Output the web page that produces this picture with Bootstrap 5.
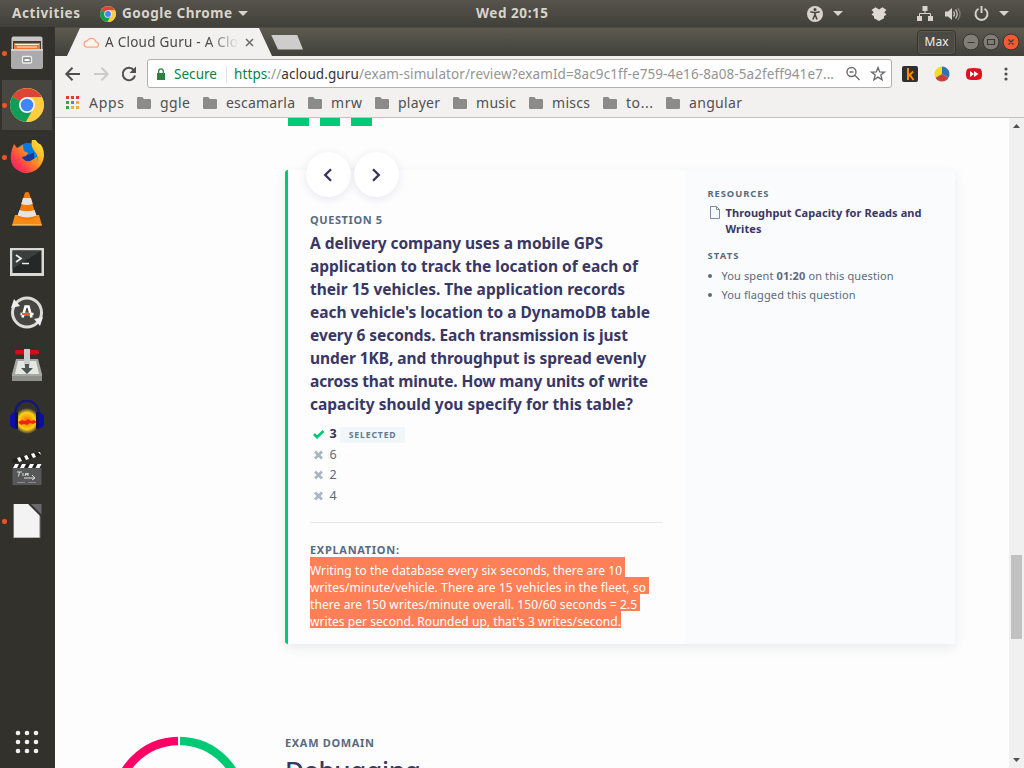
<!DOCTYPE html>
<html lang="en">
<head>
<meta charset="utf-8">
<title>A Cloud Guru - A Cloud Guru</title>
<link href="https://cdn.jsdelivr.net/npm/bootstrap@5.3.0/dist/css/bootstrap.min.css" rel="stylesheet">
<style>
body{width:1024px;height:768px;overflow:hidden;font-family:"Noto Sans","Open Sans",sans-serif;background:#fdfdfd;color:#5a6a7e}
svg{display:block;flex:none}
.fit{display:block;white-space:nowrap;flex:none}
.topbar{height:27px;background:linear-gradient(#56544c,#403f39);color:#d8d4cb;font-weight:700;font-size:13.5px;line-height:27px;padding-left:12px}
.dock{width:55px;background:#33312c}
.launcher{height:52px;width:55px;padding-left:10px;position:relative}
.launcher svg{width:34px;height:34px}
.running::before{content:"";position:absolute;left:2px;top:24px;width:4.5px;height:4.5px;border-radius:50%;background:#ee5522}
.active-app{background:linear-gradient(#484641,#484641) 2px 1px/50px 50px no-repeat}
.apps-btn{padding:0 0 12px 13px}
.tabstrip{height:29px;background:linear-gradient(#5c5a50,#42413a);padding-left:12px;border-top:1px solid #4d4b43}
.tab-shape{width:205px;height:28px;background:#f2f1f0;clip-path:polygon(0 100%,13px 0,192px 0,100% 100%);padding-left:16px;color:#4a4a4a;font-size:13.5px}
.tab-title{width:133px;overflow:hidden;-webkit-mask-image:linear-gradient(90deg,#000 104px,transparent 134px);mask-image:linear-gradient(90deg,#000 104px,transparent 134px)}
.new-tab{width:32px;height:15px;background:#cfcdcb;clip-path:polygon(0 0,26px 0,100% 100%,7px 100%);margin-left:-1px}
.user-btn{width:39px;height:25px;border:1px solid #35342e;border-radius:4px;background:#4b4a43;color:#eee;font-size:12px;box-shadow:inset 0 0 0 1px #59574f}
.toolbar{height:35px;background:#f2f1f0;padding-left:9px}
.omnibox{width:745px;height:29px;border:1px solid #b2b0ae;border-radius:3px;background:#fff;margin-left:9px;padding-left:8px;font-size:13.5px;color:#949494}
.omnibox .fit{position:relative;top:.5px}
.secure{color:#0b8043}
.bookmarks{height:27px;background:#f2f1f0;border-bottom:1px solid #c4c2c0;font-size:14px;color:#505050;padding:0 0 3px 11px}
.viewport{background:#fdfdfd;padding-left:230px;height:650px;overflow:hidden}
.scrollbar{width:15px;background:#f0f0f0}
.thumb{width:11px;height:84px;background:#c1c1c1}
.steps{height:8px;padding-left:3px}
.steps i{height:8px;background:#00c975}
.review{width:670px;height:474px;margin-top:44px;background:#fdfdfe;border-left:3px solid #00c975;border-radius:3px 0 0 3px;box-shadow:0 4px 12px rgba(40,50,80,.09);position:relative}
.question{width:397px;padding:39px 0 0 22px}
.navs{left:17.5px;top:-18px;gap:3px}
.nav-round{width:45px;height:45px;border-radius:50%;background:#fff;box-shadow:0 2px 8px rgba(40,50,80,.1)}
.eyebrow{font-weight:700;font-size:11px;line-height:22px;color:#596a7e}
.ask{font-weight:700;font-size:15.5px;line-height:23px;color:#393764;margin-top:1px}
.answers{margin-top:8px;font-size:12.5px;color:#596a7e}
.answer{height:20.6px;line-height:20px;padding-left:3px}
.answer svg{margin-right:4.5px}
.pill{background:#f1f6fa;color:#627a93;font-size:8.6px;font-weight:700;height:16px;line-height:16px;width:65px;padding-left:9px;border-radius:2px;margin:2px 0 0 3px}
.rule{height:1px;background:#e9e9eb;width:353px;margin-top:16px}
.picked{background:#ff7f57;color:#fff;font-size:12px;line-height:17px;height:17px}
.picked .fit{position:relative;top:1.6px}
.side{width:270px;background:#fafbfd;padding:13px 0 0 22.5px}
.side .eyebrow{font-size:9.4px}
.res{color:#393764;font-weight:700;font-size:11px;line-height:16px}
.stats{margin-top:-1px}
.stat{font-size:11px;line-height:19px}
.stat::before{content:"";width:4px;height:4px;border-radius:50%;background:#596a7e;margin-right:10px}
.domain{margin:92px 0 0 -174px}
.big{font-size:26px;line-height:32px;font-weight:500;color:#393764}
</style>
</head>
<body class="d-flex flex-column">
<svg width="0" height="0" class="position-absolute"><defs>
<symbol id="chrome" viewBox="0 0 34 34"><circle cx="17" cy="17" r="17" fill="#fc4"/><path d="M17 17 2.3 8.5A17 17 0 0 1 31.7 9H17z" fill="#db4437"/><path d="M17 17 2.3 8.5A17 17 0 0 0 16 34l7-13z" fill="#0f9d58"/><path d="M17 9H31.7A17 17 0 0 1 16 34l8-13z" fill="#ffcd40"/><circle cx="17" cy="17" r="8" fill="#f4f4f4"/><circle cx="17" cy="17" r="6.3" fill="#4285f4"/></symbol>
<symbol id="folder" viewBox="0 0 14 12"><path d="M0 1.2Q0 0 1.200 0h4l1.800 2h5.800Q14 2 14 3.200v7.600Q14 12 12.800 12H1.200Q0 12 0 10.800z" fill="#8b8b8b"/></symbol>
<symbol id="down" viewBox="0 0 10 5"><path d="M0 0h10L5 5z" fill="#d8d4cb"/></symbol>
<symbol id="cross" viewBox="0 0 12 12"><path d="m3 3.500 5 5M8 3.500l-5 5" stroke="#a9b5c2" stroke-width="2.700" stroke-linecap="square"/></symbol>
</defs></svg>

<header class="topbar d-flex align-items-center flex-shrink-0">
<span class="fit" data-w="68">Activities</span>
<svg width="16" height="16" style="margin-left:20px"><use href="#chrome"/></svg>
<span class="fit" data-w="110" style="margin-left:6px">Google Chrome</span>
<svg width="10" height="5" style="margin-left:6px"><use href="#down"/></svg>
<span class="fit" data-w="72" style="margin-left:228px">Wed 20:15</span>
<svg width="16" height="16" viewBox="0 0 16 16" style="margin-left:259px"><circle cx="8" cy="8" r="8" fill="#d8d4cb"/><circle cx="8" cy="3.400" r="1.500" fill="#48463f"/><path d="M3.300 5.800 7 6.500h2l3.700-.7M8 6.500V9M8 8.500l-2.100 5M8 8.500l2.100 5" fill="none" stroke="#48463f" stroke-width="1.600"/></svg>
<svg width="10" height="5" style="margin-left:10px"><use href="#down"/></svg>
<svg width="16" height="14" viewBox="0 0 16 14" style="margin-left:28px"><path d="M4.500.300 8 2.600 11.500.300 15.500 3 13.200 5.200l2.300 2.300-2.500 1.800v2L8 14l-5-2.700v-2L.5 7.500l2.300-2.300L.5 3z" fill="#dedad2"/></svg>
<svg width="16" height="15" viewBox="0 0 16 15" style="margin-left:30px"><path d="M5.500 0h5v5h-5zM0 10h5v5H0zM11 10h5v5h-5z" fill="#d8d4cb"/><path d="M8 5v2.500M2.500 10V7.500h11V10" fill="none" stroke="#d8d4cb"/></svg>
<svg width="16" height="14" viewBox="0 0 16 14" style="margin-left:12px"><path d="M0 4.500h3L7 1v12L3 9.500H0z" fill="#d8d4cb"/><path d="M8.500 4.500q2 2.500 0 5M10.500 2.500q3.500 4.500 0 9" fill="none" stroke="#bdb9b1" stroke-width="1.400"/><path d="M12.800 1q4.500 6 0 12" fill="none" stroke="#7f7c74" stroke-width="1.300"/></svg>
<svg width="15" height="16" viewBox="0 0 15 16" style="margin-left:13px"><path d="M4.500 2.800a6 6 0 1 0 6 0M7.500 0v7" fill="none" stroke="#d8d4cb" stroke-width="1.900"/></svg>
<svg width="10" height="5" style="margin-left:10px"><use href="#down"/></svg>
</header>

<div class="d-flex flex-grow-1">
<nav class="dock d-flex flex-column flex-shrink-0">
<div class="launcher running d-flex align-items-center"><svg viewBox="0 0 34 34"><path d="M1.500 2.500Q1.500.500 3.500.500h27q2 0 2 2v14h-31z" fill="#c6c6c6"/><path d="M3 5h28v11H3z" fill="#4a3b30"/><path d="M4 7h26v6H4z" fill="#e77b32"/><path d="M5 8.500h24M7 11h20" stroke="#fff0d8"/><path d="M1 13h32v18q0 2-2 2H3q-2 0-2-2z" fill="#ababab"/><path d="M1 13h32v2H1z" fill="#d2d2d2"/><rect x="12.500" y="20.500" width="9" height="6.500" rx="1" fill="#888" stroke="#eee" stroke-width="1.300"/><path d="M14.500 24h5" stroke="#fff" stroke-width="2"/></svg></div>
<div class="launcher running active-app d-flex align-items-center"><svg><use href="#chrome"/></svg></div>
<div class="launcher running d-flex align-items-center"><svg viewBox="0 0 34 34"><defs><linearGradient id="fx" x1="1" y1="0" x2="0" y2="1"><stop stop-color="#fff044"/><stop offset=".3" stop-color="#ffc228"/><stop offset=".5" stop-color="#ff8424"/><stop offset=".75" stop-color="#ff3750"/><stop offset="1" stop-color="#e01575"/></linearGradient></defs><circle cx="18" cy="16" r="13" fill="#0a7fe8"/><path d="M8 9q9-9 15-3l2 15-11 5z" fill="#0879dc"/><path d="M11 15q8 1 13-3v14H12z" fill="#173998"/><path d="M4 4 7 8q3-1 6-3 0 4 1 6l4 2-2 3-4 1q2 5 8 4 4-2 7-4 1 3-2 6 5-3 1-10-7-7-3-16l5 6q6 2 6 13-1 9-8 14-9 6-17 1Q-1 26 1 14q1-6 3-10z" fill="url(#fx)"/></svg></div>
<div class="launcher d-flex align-items-center"><svg viewBox="0 0 34 34"><path d="m5 23-3 10.500h30L29 23z" fill="#f88b13"/><path d="M3 32h28l1 1.500H2z" fill="#ffb14b"/><path d="M15 .5q2-1 4 0L26.500 25Q17 31 7.500 25z" fill="#f07a08"/><path d="M13 6h8l1.800 6q-5.800 2-11.600 0zM9.500 18q7.500 2.500 15 0l2 5.500q-9 4-19 0z" fill="#e4e4e4"/></svg></div>
<div class="launcher d-flex align-items-center"><svg viewBox="0 0 34 34"><rect x="0" y="4" width="34" height="28" fill="#d8d8d5"/><rect x="2.500" y="6.500" width="29" height="22.500" fill="#242827"/><path d="M2.500 6.500h29L2.500 25z" fill="#3a3e3d"/><path d="m6 11 5 3.500L6 18M12 19.500h7" fill="none" stroke="#eee" stroke-width="1.700"/></svg></div>
<div class="launcher d-flex align-items-center"><svg viewBox="0 0 34 34"><circle cx="17" cy="16.500" r="14.500" fill="#484642" stroke="#dddcd8" stroke-width="3"/><path d="m1 12 9-2-6-7zM33 21l-9 2 6 7z" fill="#eee"/><path d="m12.500 21.500 3-11h3l3 11M10.500 18h13" fill="none" stroke="#fff" stroke-width="2.600"/><path d="M12 18h8" stroke="#ee5b28" stroke-width="2"/></svg></div>
<div class="launcher d-flex align-items-center"><svg viewBox="0 0 34 34"><path d="M6 11h22l4 15v7H2v-7z" fill="#a6a9a3"/><path d="M8 13h18l3 13H5z" fill="#e5e7e1"/><path d="M2 28h30v5H2z" fill="#8d908b"/><rect x="5" y="2" width="24" height="4.500" rx="2" fill="#d50d16"/><path d="M14 1h6v17h-6z" fill="#c9ccca"/><path d="M11 20h4v-4h4v4h4l-6 6z" fill="#4d5755"/></svg></div>
<div class="launcher d-flex align-items-center"><svg viewBox="0 0 34 34"><defs><radialGradient id="au"><stop offset=".2" stop-color="#ff8a00"/><stop offset=".65" stop-color="#ffcf16"/><stop offset="1" stop-color="#ffd735" stop-opacity="0"/></radialGradient></defs><ellipse cx="17" cy="21" rx="13" ry="13" fill="url(#au)"/><path d="m8 22 4-2 3 1 3-2 3 2 3-1 3 2-4 2-3-1-3 2-3-1-3 1z" fill="#f22407"/><path d="M5 15C5-4 29-4 29 15" fill="none" stroke="#15186e" stroke-width="2.500"/><path d="M8 12v17Q0 29-1 21q0-9 9-9zM26 12v17q8 0 9-8 0-9-9-9z" fill="#0b0fa8"/><path d="M6.500 12.500v16M27.500 12.500v16" stroke="#11133f" stroke-width="2.500"/></svg></div>
<div class="launcher d-flex align-items-center"><svg viewBox="0 0 34 34"><path d="m2 7 28-7 1 4L3 11z" fill="#222"/><path d="m7 6 3-1 2 4-3 1zM14 4l3-1 2 4-3 1zM21 2l3-1 2 4-3 1zM28 0h2l1 3z" fill="#fff"/><path d="M2.500 12h29v21h-29z" fill="#575858"/><path d="M2.500 12h29v4h-29z" fill="#222"/><path d="M5 12h4l-2 4H3zM12 12h4l-2 4h-4zM20 12h4l-2 4h-4zM27.500 12h4l-2 4h-4z" fill="#fff"/><path d="M7 20h5M9.500 20l-1 4.500M13 21v3M15 24l1-3 1 2 1-2v3M14 26h11M22 23l3 3-3 2" stroke="#ddd" fill="none"/><path d="M7 30.500h8M18 30.500h8" stroke="#888"/></svg></div>
<div class="launcher running d-flex align-items-center"><svg viewBox="0 0 34 34"><path d="M3.500-.5H20l10 11v23.500h-26.500z" fill="#f3f3f3" stroke="#777"/><path d="M19-.5h12.500V12z" fill="#6a6a6a"/><path d="m19-.5 12.500 12.500" stroke="#333" stroke-width="2"/></svg></div>
<div class="apps-btn mt-auto"><svg width="28" height="28" viewBox="0 0 28 28" fill="#f2f1ef"><circle cx="5" cy="5" r="2.300"/><circle cx="14" cy="5" r="2.300"/><circle cx="23" cy="5" r="2.300"/><circle cx="5" cy="14" r="2.300"/><circle cx="14" cy="14" r="2.300"/><circle cx="23" cy="14" r="2.300"/><circle cx="5" cy="23" r="2.300"/><circle cx="14" cy="23" r="2.300"/><circle cx="23" cy="23" r="2.300"/></svg></div>
</nav>

<div class="flex-grow-1">
<div class="tabstrip d-flex align-items-center">
<div class="tab-shape d-flex align-items-center"><svg width="16" height="11" viewBox="0 0 16 11"><path d="M4 10.200h8.500a2.700 2.700 0 0 0 .4-5.400A4.600 4.600 0 0 0 4.300 4 3.100 3.100 0 0 0 4 10.200z" fill="#fff4ec" stroke="#f6a988" stroke-width="1.300"/></svg>
<div class="tab-title" style="margin-left:6px"><span class="fit" data-w="133">A Cloud Guru - A Clo</span></div>
<svg width="9" height="9" viewBox="0 0 9 9" style="margin-left:7px"><path d="m1 1 7 7M8 1 1 8" stroke="#6b6b6b" stroke-width="1.500"/></svg></div>
<div class="new-tab"></div>
<div class="user-btn d-flex align-items-center justify-content-center ms-auto"><span class="fit" data-w="24">Max</span></div>
<svg width="64" height="20" viewBox="0 0 64 20" style="margin-left:4px"><g stroke="#36352f"><circle cx="11" cy="10" r="8" fill="#807e76"/><circle cx="31" cy="10" r="8" fill="#807e76"/><circle cx="51" cy="10" r="8" fill="#f15b34"/></g><path d="M7.500 10.500h7M27.500 7.500h7v5h-7zM48.500 7.500l5 5M53.500 7.500l-5 5" fill="none" stroke="#3b3a34" stroke-width="1.200"/></svg>
</div>
<div class="toolbar d-flex align-items-center">
<svg width="74" height="18" viewBox="0 0 74 18" fill="none" stroke-width="2"><path d="M16 9H3M8.500 2.800 2.300 9l6.200 6.200" stroke="#4f4f4f"/><path d="M30 9h13M37.500 2.800 43.700 9l-6.200 6.200" stroke="#cbcac9"/><path d="M69.700 5A6.200 6.200 0 1 0 71 10.500" stroke="#4f4f4f"/><path d="M72 1.500V8h-6.500z" fill="#4f4f4f"/></svg>
<div class="omnibox d-flex align-items-center">
<svg width="10" height="12" viewBox="0 0 10 12"><path d="M1 5h8v7H1z" fill="#2c8143"/><path d="M2.700 5V3.200a2.300 2.300 0 0 1 4.600 0V5" fill="none" stroke="#2c8143" stroke-width="1.300"/></svg>
<span class="fit secure" data-w="43" style="margin-left:8px">Secure</span>
<span class="vr" style="height:17px;margin:6px 7px 0 9px;align-self:flex-start"></span>
<span class="fit" data-w="600"><span class="secure">https</span>://<span style="color:#333">acloud.guru</span>/exam-simulator/review?examId=8ac9c1ff-e759-4e16-8a08-5a2feff941e7...</span>
<svg width="15" height="15" viewBox="0 0 15 15" fill="none" stroke="#6b6b6b" stroke-width="1.400" style="margin-left:12px"><circle cx="5.500" cy="6" r="4.500"/><path d="m9 9.500 4.500 4.500M3.500 6h4"/></svg>
<svg width="16" height="15" viewBox="0 0 16 15" style="margin-left:9px"><path d="m8 1.500 1.700 4.400 4.800.2-3.700 3 1.300 4.700L8 11.100l-4.100 2.700 1.300-4.700-3.700-3 4.800-.2z" fill="none" stroke="#666" stroke-width="1.300"/></svg>
</div>
<svg width="16" height="16" viewBox="0 0 16 16" style="margin-left:10px"><rect width="16" height="16" rx="2" fill="#2e2e2e"/><path d="M6 2v12M11.200 5.500 6.500 10M8 9l3.500 5" stroke="#f80" stroke-width="2" fill="none"/></svg>
<svg width="16" height="16" viewBox="0 0 16 16" style="margin-left:16px"><path d="M8 8V.5A7.500 7.500 0 0 0 1.500 11.700z" fill="#f2df22"/><path d="M8 8V.5a7.500 7.500 0 0 1 6.500 11.200z" fill="#2f73b7"/><path d="m8 8 6.500 3.700a7.500 7.500 0 0 1-13 0z" fill="#c3413f"/></svg>
<svg width="16" height="12" viewBox="0 0 16 12" style="margin-left:16px"><path d="M2.500.500q5.500-1 11 0Q16 1 16 6t-2.500 5.500q-5.500 1-11 0Q0 11 0 6T2.500.500z" fill="#e30f1c"/><path d="m4 3 4 3-4 3zM8 3l4.500 3L8 9z" fill="#fff"/></svg>
<svg width="4" height="14" viewBox="0 0 4 14" fill="#505050" style="margin-left:22px"><circle cx="2" cy="2" r="1.600"/><circle cx="2" cy="7" r="1.600"/><circle cx="2" cy="12" r="1.600"/></svg>
</div>
<div class="bookmarks d-flex align-items-center" id="marks">
<svg width="13" height="13" viewBox="0 0 13 13"><path d="M0 0h3v3H0zM5 0h3v3H5zM10 0h3v3h-3z" fill="#e33b32"/><path d="M0 5h3v3H0zM0 10h3v3H0z" fill="#36a350"/><path d="M5 5h3v3H5z" fill="#4285f4"/><path d="M10 5h3v3h-3zM5 10h3v3H5zM10 10h3v3h-3z" fill="#f5ae2d"/></svg>
<span class="fit" data-w="35" style="margin:0 13px 0 10px">Apps</span>
</div>
<div class="d-flex">
<main class="viewport flex-grow-1">
<div class="steps d-flex"><i style="width:21px"></i><i style="width:20px;margin-left:11px"></i><i style="width:21px;margin-left:11px"></i></div>
<section class="review d-flex">
<div class="navs position-absolute d-flex">
<div class="nav-round d-flex align-items-center justify-content-center"><svg width="10" height="14" viewBox="0 0 10 14"><path d="M8 1.200 2.200 7 8 12.800" fill="none" stroke="#35325c" stroke-width="2.300"/></svg></div>
<div class="nav-round d-flex align-items-center justify-content-center"><svg width="10" height="14" viewBox="0 0 10 14"><path d="M2 1.200 7.800 7 2 12.800" fill="none" stroke="#35325c" stroke-width="2.300"/></svg></div>
</div>
<div class="question flex-shrink-0">
<div class="eyebrow fit" data-w="72">QUESTION 5</div>
<div class="ask">
<span class="fit" data-w="293">A delivery company uses a mobile GPS</span>
<span class="fit" data-w="328">application to track the location of each of</span>
<span class="fit" data-w="315">their 15 vehicles. The application records</span>
<span class="fit" data-w="340">each vehicle's location to a DynamoDB table</span>
<span class="fit" data-w="318">every 6 seconds. Each transmission is just</span>
<span class="fit" data-w="336">under 1KB, and throughput is spread evenly</span>
<span class="fit" data-w="338">across that minute. How many units of write</span>
<span class="fit" data-w="323">capacity should you specify for this table?</span>
</div>
<div class="answers">
<div class="answer d-flex align-items-center fw-bold" style="color:#35325c"><svg width="12" height="12" viewBox="0 0 12 12"><path d="m1 6 3 3.200L10.500 3" fill="none" stroke="#00c975" stroke-width="2.600"/></svg>3<span class="pill"><span class="fit" data-w="47">SELECTED</span></span></div>
<div class="answer d-flex align-items-center"><svg width="12" height="12"><use href="#cross"/></svg>6</div>
<div class="answer d-flex align-items-center"><svg width="12" height="12"><use href="#cross"/></svg>2</div>
<div class="answer d-flex align-items-center"><svg width="12" height="12"><use href="#cross"/></svg>4</div>
</div>
<div class="rule"></div>
<div class="eyebrow fit" data-w="89" style="margin-top:16px">EXPLANATION:</div>
<div class="d-flex flex-column align-items-start" style="margin-top:-4px">
<div class="picked" style="padding:3px 3px 0 0;height:20px"><span class="fit" data-w="312">Writing to the database every six seconds, there are 10</span></div>
<div class="picked" style="padding-right:3px"><span class="fit" data-w="336">writes/minute/vehicle. There are 15 vehicles in the fleet, so</span></div>
<div class="picked" style="padding-right:3px"><span class="fit" data-w="327">there are 150 writes/minute overall. 150/60 seconds = 2.5</span></div>
<div class="picked"><span class="fit" data-w="311">writes per second. Rounded up, that's 3 writes/second.</span></div>
</div>
</div>
<aside class="side">
<div class="eyebrow fit" data-w="61">RESOURCES</div>
<div class="d-flex"><svg width="10" height="13" viewBox="0 0 10 13" style="margin:1px 6px 0 2px"><path d="M.5.500h6l3 3v9h-9zM6.500.500v3h3" fill="none" stroke="#7b8fa4"/></svg>
<div class="res"><span class="fit" data-w="196">Throughput Capacity for Reads and</span><span class="fit" data-w="36">Writes</span></div></div>
<div class="eyebrow fit" data-w="31" style="margin-top:8px">STATS</div>
<div class="stats">
<div class="stat d-flex align-items-center"><span class="fit" data-w="172">You spent <b>01:20</b> on this question</span></div>
<div class="stat d-flex align-items-center"><span class="fit" data-w="134">You flagged this question</span></div>
</div>
</aside>
</section>
<section class="domain d-flex">
<svg width="136" height="136" viewBox="0 0 136 136" fill="none" stroke-width="8.500"><path d="M69 5A63 63 0 0 1 131 68" stroke="#00c975"/><path d="M67 5A63 63 0 0 0 5 68" stroke="#ff0066"/></svg>
<div style="margin:-4px 0 0 38px"><div class="eyebrow fit" data-w="89">EXAM DOMAIN</div><div class="big fit" data-w="136">Debugging</div></div>
</section>
</main>
<div class="scrollbar d-flex flex-column align-items-center">
<svg width="15" height="14" viewBox="0 0 15 14"><path d="M4 10h7L7.500 6z" fill="#505050"/></svg>
<div class="thumb" style="margin-top:423px"></div>
<svg width="15" height="14" viewBox="0 0 15 14" class="mt-auto"><path d="M4 4h7L7.500 8z" fill="#505050"/></svg>
</div>
</div>
</div>
</div>
<script src="https://cdn.jsdelivr.net/npm/bootstrap@5.3.0/dist/js/bootstrap.bundle.min.js"></script>
<script>
// Bookmark folders: label and label width in pixels
[['ggle',30],['escamarla',69],['mrw',31],['player',42],['music',40],['miscs',38],['to...',27],['angular',53]].forEach(function(b){
  document.getElementById('marks').insertAdjacentHTML('beforeend','<svg width="14" height="12"><use href="#folder"/></svg><span class="fit" data-w="'+b[1]+'" style="margin:0 13px 0 9px">'+b[0]+'</span>');
});
// Space the letters so that each label takes its set width
document.querySelectorAll('.fit[data-w]').forEach(function(e){
  var w=+e.dataset.w,r=document.createRange();r.selectNodeContents(e);
  var n=r.getBoundingClientRect().width;
  e.style.letterSpacing=((w-n)/(e.textContent.length-1))+'px';
  e.style.width=w+'px';
});
</script>
</body>
</html>
